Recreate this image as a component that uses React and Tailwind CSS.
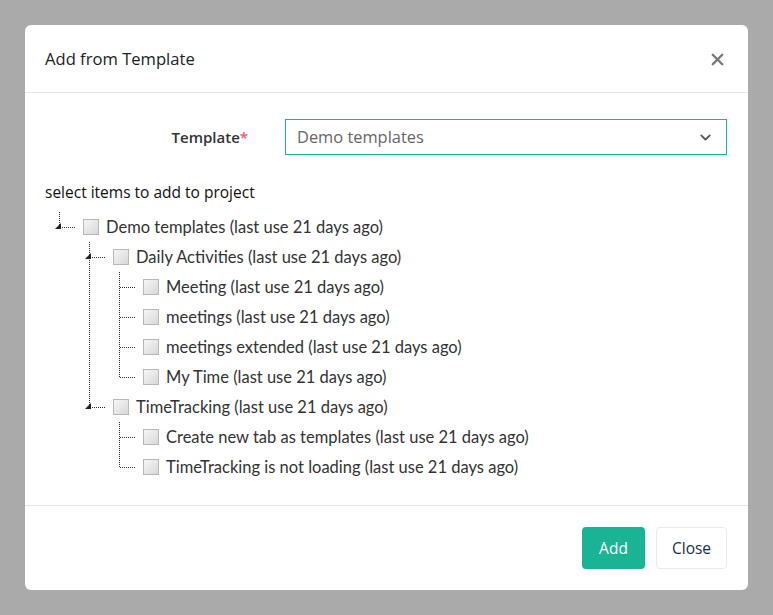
import { ChevronDown, X } from 'lucide-react'

const tree = [
  { label: 'Demo templates', level: 0, expanded: true, anc: [], last: true },
  { label: 'Daily Activities', level: 1, expanded: true, anc: [false], last: false },
  { label: 'Meeting', level: 2, anc: [false, true], last: false },
  { label: 'meetings', level: 2, anc: [false, true], last: false },
  { label: 'meetings extended', level: 2, anc: [false, true], last: false },
  { label: 'My Time', level: 2, anc: [false, true], last: true },
  { label: 'TimeTracking', level: 1, expanded: true, anc: [false], last: true },
  { label: 'Create new tab as templates', level: 2, anc: [false, false], last: false },
  { label: 'TimeTracking is not loading', level: 2, anc: [false, false], last: true },
]

function Connector({ last, expanded }) {
  return (
    <svg width="38" height="30" className="shrink-0">
      <line x1="14.5" y1="0" x2="14.5" y2={last ? 15 : 30} stroke="#333" strokeDasharray="1 1" />
      <line x1="15" y1="15.5" x2="31" y2="15.5" stroke="#333" strokeDasharray="1 1" />
      {expanded && <polygon points="10,17 16,17 16,11" fill="#222" />}
    </svg>
  )
}

function Indent({ line }) {
  return (
    <svg width="30" height="30" className="shrink-0">
      {line && <line x1="14.5" y1="0" x2="14.5" y2="30" stroke="#333" strokeDasharray="1 1" />}
    </svg>
  )
}

export default function App() {
  return (
    <div className="min-h-screen bg-[#aaaaaa] p-[25px]" style={{ fontFamily: '"Open Sans", "Noto Sans", sans-serif' }}>
      <div className="w-[723px] h-[565px] bg-white rounded-md flex flex-col">
        {/* header */}
        <div className="h-[68px] border-b border-[#e5e5e5] flex items-center justify-between px-5 pt-[2px]">
          <h4 className="text-[16.6px] font-medium text-[#222]">Add from Template</h4>
          <X size={19} strokeWidth={3} className="text-[#777] mr-[1px]" />
        </div>

        {/* body */}
        <div className="flex-1 px-5 pt-[26px] border-b border-[#e5e5e5]">
          <div className="flex items-center">
            <label className="w-[205px] text-right text-[15px] font-semibold text-[#333] pr-[2px]">
              Template<span className="text-[#ed5565]">*</span>
            </label>
            <div className="ml-[35px] w-[442px] h-[36px] border border-[#1ab394] flex items-center justify-between pl-[11px] pr-[12px]">
              <span className="text-[16.4px] text-[#666]">Demo templates</span>
              <ChevronDown size={17} strokeWidth={2.5} className="text-[#555]" />
            </div>
          </div>

          <div className="mt-[26px] text-[15.5px] font-medium text-[#111]">select items to add to project</div>

          <div className="mt-[8px]" style={{ fontFamily: 'Lato, sans-serif' }}>
            {tree.map((n, i) => (
              <div key={i} className="flex items-center h-[30px]">
                {n.anc.map((a, j) => (
                  <Indent key={j} line={a} />
                ))}
                <Connector last={n.last} expanded={n.expanded} />
                <span className="w-4 h-4 shrink-0 border border-[#b8b8b8] bg-gradient-to-br from-[#f6f6f6] to-[#d8d8d8]" />
                <span className="ml-[7px] text-[16.5px] text-[#333] whitespace-nowrap">
                  {n.label} (last use 21 days ago)
                </span>
              </div>
            ))}
          </div>
        </div>

        {/* footer */}
        <div className="h-[84px] flex items-center justify-end gap-[11px] px-[21px]">
          <button className="w-[63px] h-[42px] rounded bg-[#1ab394] text-white text-[15.5px] pt-[2px]">Add</button>
          <button className="w-[71px] h-[42px] rounded border border-[#e7eaec] text-[#1c2a48] text-[15.5px] pt-[2px]">Close</button>
        </div>
      </div>
    </div>
  )
}
